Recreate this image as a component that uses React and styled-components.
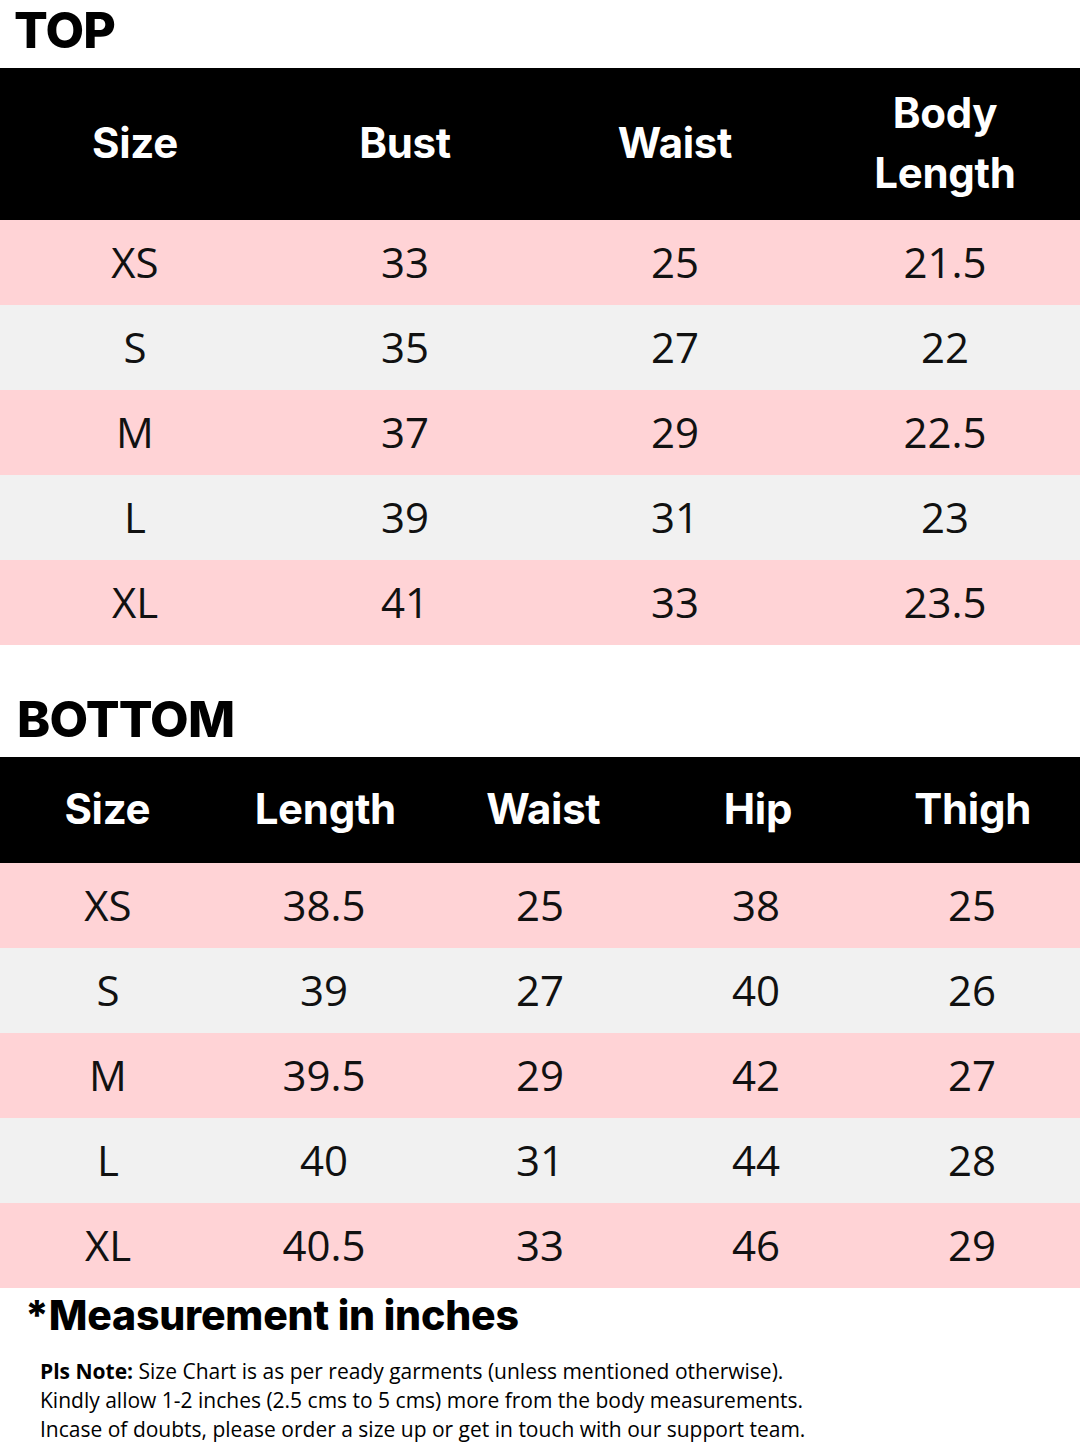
import React from "react";
import styled, { createGlobalStyle } from "styled-components";

const topRows = [
  ["XS", "33", "25", "21.5"],
  ["S", "35", "27", "22"],
  ["M", "37", "29", "22.5"],
  ["L", "39", "31", "23"],
  ["XL", "41", "33", "23.5"],
];

const bottomRows = [
  ["XS", "38.5", "25", "38", "25"],
  ["S", "39", "27", "40", "26"],
  ["M", "39.5", "29", "42", "27"],
  ["L", "40", "31", "44", "28"],
  ["XL", "40.5", "33", "46", "29"],
];

const SizeTable = ({ heads, rows, headHeight }) => (
  <Table>
    <HeadRow cols={heads.length} height={headHeight}>
      {heads.map((h) => (
        <HeadCell key={h}>{h}</HeadCell>
      ))}
    </HeadRow>
    {rows.map((r, i) => (
      <Row key={r[0]} cols={r.length} pink={i % 2 === 0}>
        {r.map((v, j) => (
          <Cell key={j}>{v}</Cell>
        ))}
      </Row>
    ))}
  </Table>
);

const App = () => {
  return (
    <Page>
      <GlobalStyle />
      <Title>TOP</Title>
      <SizeTable
        heads={["Size", "Bust", "Waist", "Body Length"]}
        rows={topRows}
        headHeight={152}
      />
      <Title bottom>BOTTOM</Title>
      <SizeTable
        heads={["Size", "Length", "Waist", "Hip", "Thigh"]}
        rows={bottomRows}
        headHeight={106}
      />
      <Measure>*Measurement in inches</Measure>
      <Notes>
        <p>
          <b>Pls Note:</b> Size Chart is as per ready garments (unless mentioned
          otherwise).
        </p>
        <p>Kindly allow 1-2 inches (2.5 cms to 5 cms) more from the body measurements.</p>
        <p>Incase of doubts, please order a size up or get in touch with our support team.</p>
      </Notes>
    </Page>
  );
};

export default App;

const GlobalStyle = createGlobalStyle`
  body {
    margin: 0;
    background: #ffffff;
  }
`;

const Page = styled.div`
  width: 1080px;
  height: 1450px;
  overflow: hidden;
  background: #ffffff;
  font-family: Inter, "Liberation Sans", sans-serif;
  color: #000;
`;

const Title = styled.h1`
  margin: 0;
  height: ${(p) => (p.bottom ? "112px" : "68px")};
  display: flex;
  align-items: ${(p) => (p.bottom ? "flex-end" : "flex-start")};
  padding: ${(p) => (p.bottom ? "0 0 13px 17px" : "5px 0 0 14px")};
  box-sizing: border-box;
  font-size: 50px;
  font-weight: 800;
  letter-spacing: -0.8px;
  line-height: 1;
`;

const Table = styled.div`
  display: flex;
  flex-direction: column;
`;

const HeadRow = styled.div`
  display: grid;
  grid-template-columns: repeat(${(p) => p.cols}, 1fr);
  height: ${(p) => p.height}px;
  background: #000;
  align-items: center;
`;

const HeadCell = styled.div`
  color: #fff;
  font-weight: 700;
  font-size: 42px;
  line-height: 60px;
  text-align: center;
  padding: 0 40px;
  letter-spacing: -0.3px;
  margin-top: -2px;
`;

const Row = styled.div`
  display: grid;
  grid-template-columns: repeat(${(p) => p.cols}, 1fr);
  height: 85px;
  align-items: center;
  background: ${(p) => (p.pink ? "#ffd3d6" : "#f1f1f1")};
`;

const Cell = styled.div`
  text-align: center;
  font-family: "Open Sans", "Noto Sans", sans-serif;
  font-size: 42px;
  font-weight: 400;
  color: #111;
  margin-top: -2px;
`;

const Measure = styled.div`
  padding: 3px 0 0 25px;
  font-size: 41px;
  font-weight: 800;
  letter-spacing: -0.2px;
  line-height: 48px;
`;

const Notes = styled.div`
  padding: 18px 0 0 40px;
  font-family: "Open Sans", Lato, sans-serif;
  font-size: 21px;
  letter-spacing: 0;
  line-height: 29px;
  color: #000;
  p {
    margin: 0;
    white-space: nowrap;
  }
  b {
    font-weight: 700;
  }
`;
